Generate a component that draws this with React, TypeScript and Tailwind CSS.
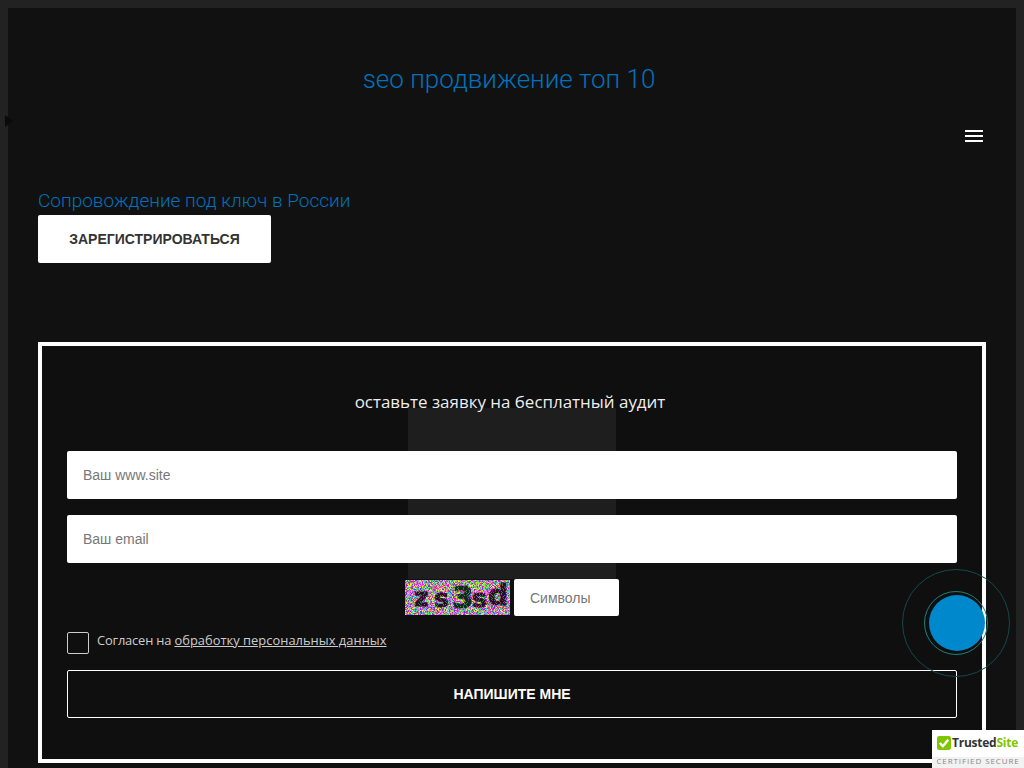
const makeNoise = (step: number, start: number, colors: string[]) => {
  const cells: { x: number; y: number; c: string }[] = [];
  let seed = start;
  for (let y = 0; y < 35; y++) {
    for (let x = 0; x < 105; x += step) {
      seed = (seed * 16807) % 2147483647;
      cells.push({ x: x + (seed % step), y, c: colors[(seed >> 4) % colors.length] });
    }
  }
  return cells;
};

const baseNoise = makeNoise(1, 1234, ["#ff00ff", "#22dd55", "#eeee00", "#33ccff", "#ff66ff", "#6633ff", "#ff3399", "#66ff33", "#cc66ff", "#e0e0a0", "#993399"]);
const topNoise = makeNoise(4, 98765, ["#ff00ff", "#00ff66", "#ffff00", "#00ffff", "#ff3399", "#66ff33"]);

function Captcha() {
  return (
    <svg width="105" height="35" viewBox="0 0 105 35" className="block shrink-0">
      {baseNoise.map((p, i) => (
        <rect key={i} x={p.x} y={p.y} width="1" height="1" fill={p.c} />
      ))}
      <g fontFamily="DejaVu Sans, sans-serif" fontWeight="700" fontSize="25" fill="#2a0a2a" stroke="#2a0a2a" strokeWidth="0.8">
        <text x="9" y="26">z</text>
        <text x="29" y="27">s</text>
        <text x="47" y="28" fontSize="31" fill="#0a2a1a" stroke="#0a2a1a">3</text>
        <text x="67" y="27">s</text>
        <text x="83" y="25" fontSize="28">d</text>
      </g>
      {topNoise.map((p, i) => (
        <rect key={i} x={p.x} y={p.y} width="1" height="1" fill={p.c} fillOpacity="0.45" />
      ))}
    </svg>
  );
}

function TrustedSite() {
  return (
    <div className="absolute right-0 bottom-0 w-[92px] h-[38px] bg-white font-['Open_Sans',sans-serif]">
      <div className="flex items-center h-[27px] pl-[5px] pb-[1px] gap-[1px]">
        <svg width="14" height="14" viewBox="0 0 15 15" className="shrink-0">
          <rect width="15" height="15" rx="2.5" fill="#80c600" />
          <path d="M3 7.5 L6.3 11 L12 4" fill="none" stroke="#fff" strokeWidth="2.6" />
        </svg>
        <span className="text-[12px] font-bold tracking-[-0.25px] leading-none text-[#333]">
          Trusted<span className="text-[#80c600]">Site</span>
        </span>
      </div>
      <div className="h-[11px] bg-[#f2f2f2] text-center text-[8px] leading-[8px] tracking-[0.9px] text-[#888]">CERTIFIED SECURE</div>
    </div>
  );
}

export default function App() {
  return (
    <div className="relative h-[768px] border-8 border-b-0 border-[#222] bg-[#111] font-['Liberation_Sans',sans-serif]">
      <div className="absolute left-[-3px] top-[107px] w-0 h-0 border-y-[6px] border-y-transparent border-l-[8px] border-l-[#0a0a0a]" />
      <h1 className="pt-[55px] pr-[6px] text-center font-['Roboto',sans-serif] font-light text-[26px] leading-[32px] text-[#0071bb]">seo продвижение топ 10</h1>
      <div className="flex justify-end pt-[35px] pr-[33px]">
        <div className="flex flex-col gap-[3px] w-[18px]">
          <span className="h-[2px] bg-white" />
          <span className="h-[2px] bg-white" />
          <span className="h-[2px] bg-white" />
        </div>
      </div>
      <div className="pl-[30px] pr-[30px] pt-[47px]">
        <p className="font-['Roboto',sans-serif] font-light text-[19px] leading-[24px] text-[#0071bb]">Сопровождение под ключ в России</p>
        <button className="mt-[2px] block w-[233px] h-[48px] rounded-[2px] bg-white text-[14px] font-bold text-[#333]">ЗАРЕГИСТРИРОВАТЬСЯ</button>
        <form className="relative mt-[79px] h-[421px] border-4 border-white bg-[#0f0f0f] px-[25px] pt-[44px]">
          <div className="absolute left-[366px] top-[62px] w-[208px] h-[171px] bg-[#1e1e1e]" />
          <h2 className="relative text-center font-['Open_Sans',sans-serif] text-[16.95px] leading-[24px] text-[#eee] pr-[4px]">оставьте заявку на бесплатный аудит</h2>
          <input placeholder="Ваш www.site" className="relative mt-[37px] block h-[48px] w-full rounded-[2px] bg-white px-4 text-[14px] placeholder:text-[#777]" />
          <input placeholder="Ваш email" className="relative mt-[16px] block h-[48px] w-full rounded-[2px] bg-white px-4 text-[14px] placeholder:text-[#777]" />
          <div className="relative mt-[16px] flex items-center justify-center gap-[4px]">
            <Captcha />
            <input placeholder="Символы" className="block h-[37px] w-[105px] rounded-[2px] bg-white px-4 text-[14px] placeholder:text-[#777]" />
          </div>
          <div className="relative mt-[16px] flex items-start gap-2">
            <span className="block h-[22px] w-[22px] rounded-[2px] border border-[#ccc]" />
            <span className="font-['Open_Sans',sans-serif] text-[12.88px] leading-[16px] text-[#ccc]">
              <span className="tracking-[-0.17px]">Согласен на </span>
              <a className="underline tracking-[0.03px]">обработку персональных данных</a>
            </span>
          </div>
          <button type="button" className="relative mt-[16px] block h-[48px] w-full rounded-[2px] border border-white text-[14px] font-bold text-white">НАПИШИТЕ МНЕ</button>
        </form>
      </div>
      <div className="absolute left-[894px] top-[561px] h-[108px] w-[108px] rounded-full border border-[#134a48]" />
      <div className="absolute left-[916px] top-[583px] w-[64px] h-[64px] rounded-full border border-[#1f7f7a]" />
      <div className="absolute left-[921px] top-[587px] h-[56px] w-[56px] rounded-full bg-[#0088cc]" />
      <div className="fixed right-0 bottom-0">
        <TrustedSite />
      </div>
    </div>
  );
}
